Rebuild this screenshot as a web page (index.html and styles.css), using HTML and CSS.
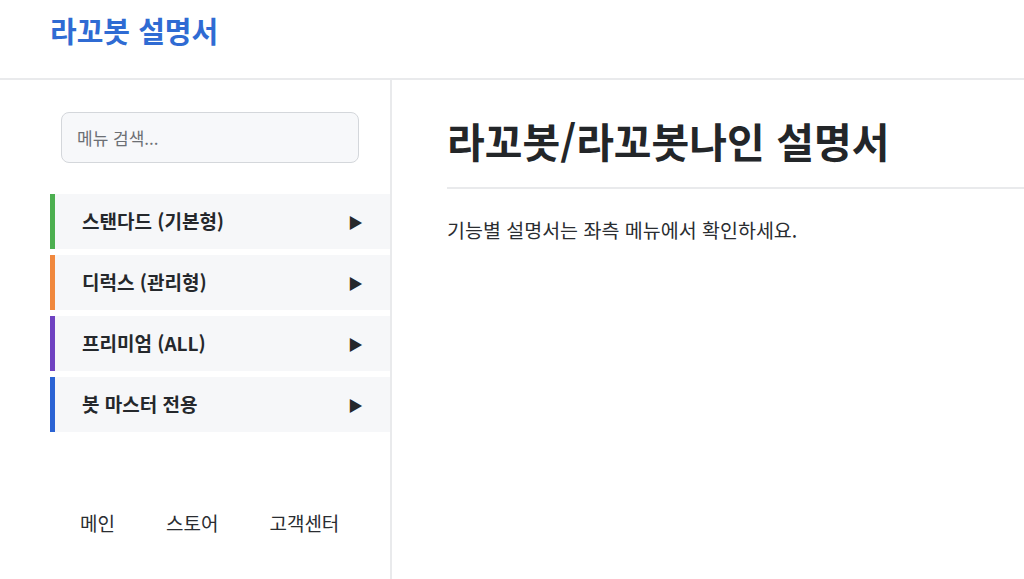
FILE: index.html
```html
<!DOCTYPE html>
<html lang="ko">
<head>
<meta charset="utf-8">
<link rel="stylesheet" href="styles.css">
</head>
<body>
<header class="topbar">
  <div class="logo">라꼬봇 설명서</div>
</header>
<div class="layout">
  <aside class="sidebar">
    <div class="search-wrap">
      <input class="search" type="text" placeholder="메뉴 검색...">
    </div>
    <nav class="menu">
      <div class="menu-item green"><span>스탠다드 (기본형)</span><span class="arrow">▶</span></div>
      <div class="menu-item orange"><span>디럭스 (관리형)</span><span class="arrow">▶</span></div>
      <div class="menu-item purple"><span>프리미엄 (ALL)</span><span class="arrow">▶</span></div>
      <div class="menu-item blue"><span>봇 마스터 전용</span><span class="arrow">▶</span></div>
    </nav>
    <div class="footer-links">
      <a>메인</a>
      <a>스토어</a>
      <a>고객센터</a>
    </div>
  </aside>
  <main class="content">
    <h1 class="title">라꼬봇/라꼬봇나인 설명서</h1>
    <p class="desc">기능별 설명서는 좌측 메뉴에서 확인하세요.</p>
  </main>
</div>
</body>
</html>
```
FILE: styles.css
```css
* { box-sizing: border-box; }
html, body { margin: 0; padding: 0; background: #fff; }
body {
  font-family: "Noto Sans CJK KR", "Noto Sans", sans-serif;
  color: #212529;
  height: 579px;
  overflow: hidden;
}
.topbar {
  height: 80px;
  border-bottom: 2px solid #e9eaec;
  padding-left: 50px;
  display: flex;
  align-items: center;
  padding-bottom: 16px;
}
.logo {
  font-size: 29px;
  font-weight: 700;
  color: #2f6bd3;
  line-height: 1.3;
}
.layout {
  display: flex;
  height: 499px;
}
.sidebar {
  width: 392px;
  flex: none;
  border-right: 2px solid #e9eaec;
  padding-left: 50px;
  display: flex;
  flex-direction: column;
}
.search-wrap {
  padding: 32px 31px 0 11px;
}
.search {
  width: 298px;
  height: 51px;
  border: 1px solid #d4d7db;
  border-radius: 8px;
  background: #f7f8fa;
  padding: 0 15px;
  font-family: inherit;
  font-size: 17px;
  color: #333;
  outline: none;
}
.search::placeholder { color: #6c6f74; }
.menu {
  margin-top: 31px;
  display: flex;
  flex-direction: column;
  gap: 6px;
}
.menu-item {
  height: 55px;
  background: #f6f7f9;
  border-left: 5px solid;
  display: flex;
  align-items: center;
  justify-content: space-between;
  padding: 0 27px 3px 27px;
  font-size: 19px;
  font-weight: 600;
  color: #25282c;
}
.menu-item.green { border-color: #4caf50; }
.menu-item.orange { border-color: #f0883e; }
.menu-item.purple { border-color: #6f42c1; }
.menu-item.blue { border-color: #2b63d4; }
.arrow { font-size: 15px; color: #25282c; padding-top: 3px; }
.footer-links {
  margin-top: auto;
  padding: 0 0 42px 30px;
  display: flex;
  gap: 51px;
  font-size: 19px;
  line-height: 1.45;
  color: #2a2d31;
}
.content {
  flex: 1;
  padding-left: 55px;
  padding-top: 32px;
}
.title {
  margin: 0;
  font-size: 41px;
  line-height: 1.4;
  font-weight: 700;
  color: #232629;
  padding-bottom: 18px;
  border-bottom: 2px solid #e9eaec;
}
.desc {
  margin: 27px 0 0;
  font-size: 19.5px;
  line-height: 1.45;
  color: #2a2d31;
}
```
